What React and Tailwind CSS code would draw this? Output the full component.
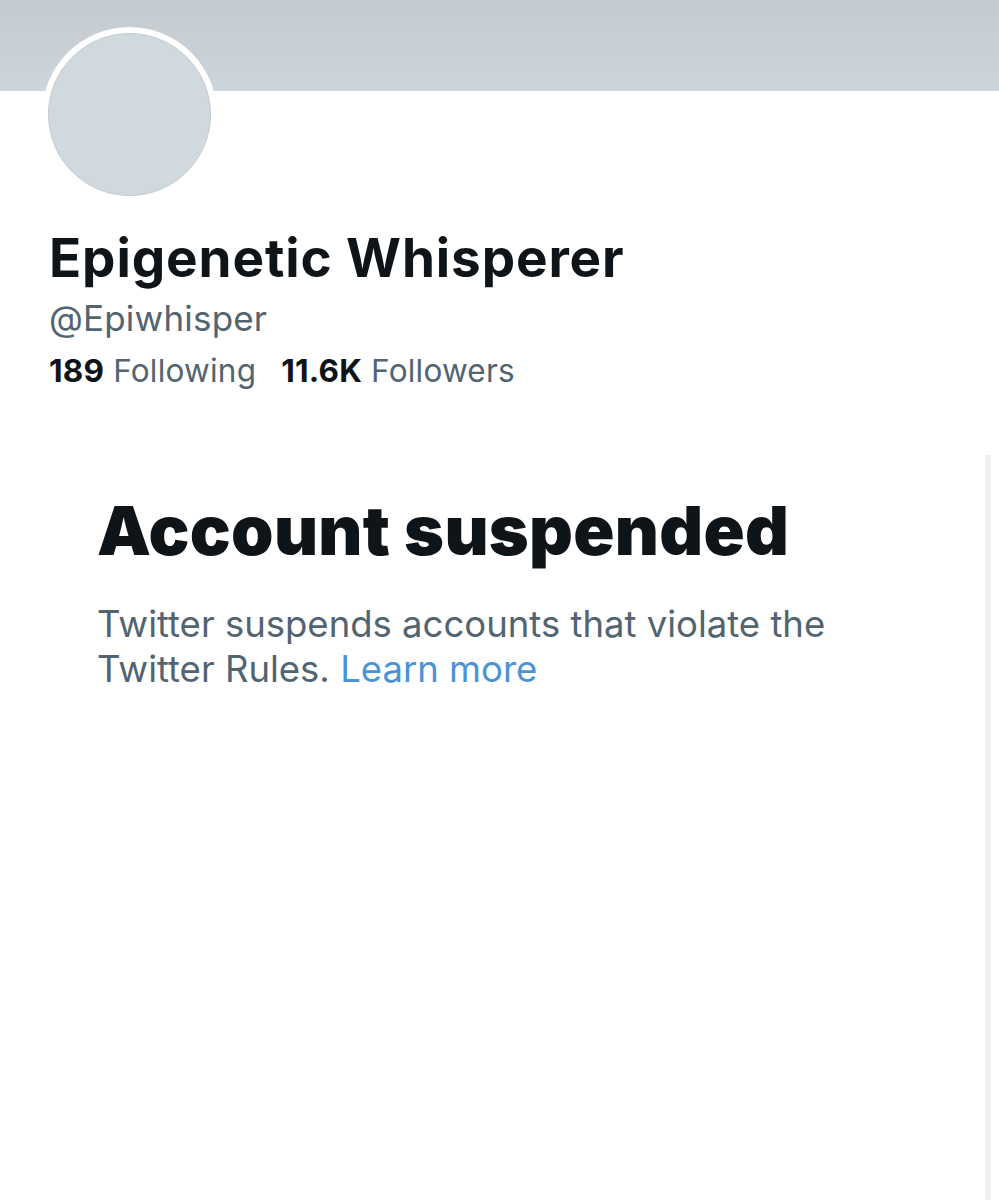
export default function App() {
  return (
    <div className="relative min-h-[1200px] w-[999px] overflow-hidden bg-white" style={{ fontFamily: "Inter, 'Noto Sans', sans-serif" }}>
      {/* banner */}
      <div className="h-[91px] w-full bg-gradient-to-b from-[#c4cbd0] to-[#ccd5db]" />

      {/* avatar */}
      <div className="absolute left-[42px] top-[27px] h-[175px] w-[175px] rounded-full bg-white p-[6px]">
        <div className="h-full w-full rounded-full border border-[#c3cbd1] bg-[#cfd9de]" />
      </div>

      <div className="px-[49px] pt-[138px]">
        <h1 className="text-[53px] font-bold leading-[58px] tracking-[0.9px] text-[#0f1419]">Epigenetic Whisperer</h1>
        <div className="mt-[7px] text-[35px] leading-[48px] tracking-[0.2px] text-[#536471]">@Epiwhisper</div>
        <div className="mt-[9px] flex items-baseline gap-[25px] text-[31.5px] leading-[40px] tracking-[0.2px] text-[#536471]">
          <span>
            <span className="font-bold text-[#0f1419]">189</span> Following
          </span>
          <span>
            <span className="font-bold text-[#0f1419]">11.6K</span> Followers
          </span>
        </div>
      </div>

      {/* scroll track */}
      <div className="absolute bottom-0 left-[985px] top-[455px] w-[6px] bg-[#efefef]" />

      <div className="px-[97px] pt-[99px]">
        <h2 className="text-[68px] font-black leading-[80px] tracking-[0.3px] text-[#0f1419]">Account suspended</h2>
        <p className="mt-[32px] w-[800px] text-[36.5px] leading-[45px] text-[#536471]">
          Twitter suspends accounts that violate the
          <br />
          Twitter Rules. <span className="text-[#4a93d7]">Learn more</span>
        </p>
      </div>
    </div>
  );
}
